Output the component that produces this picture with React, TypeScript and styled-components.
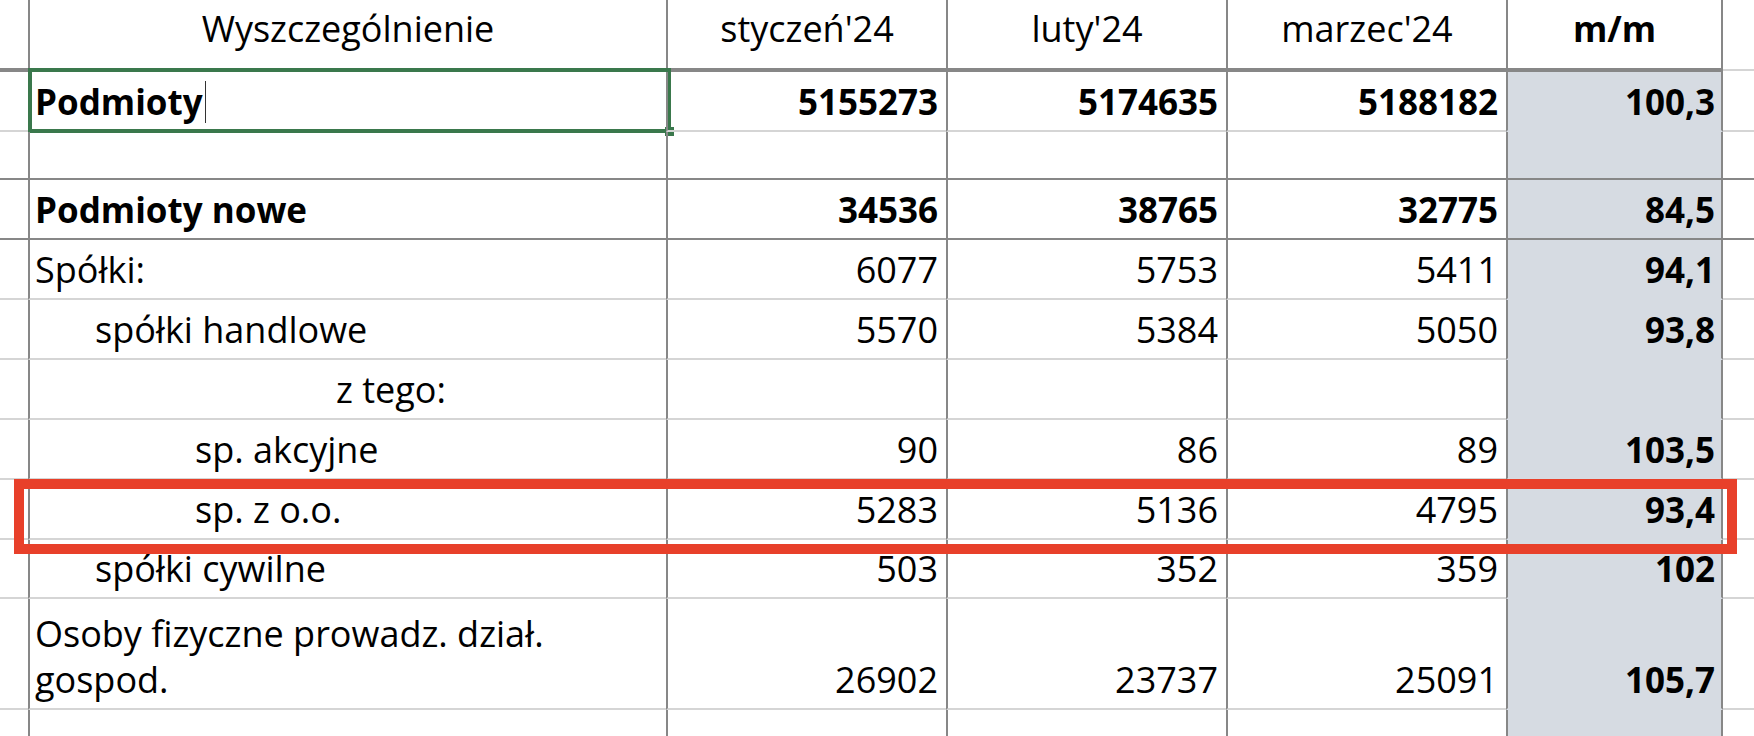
import React from "react";
import styled, { createGlobalStyle, css } from "styled-components";

const GlobalStyle = createGlobalStyle`
  html, body { margin: 0; padding: 0; background: #ffffff; overflow: hidden; }
  body { font-family: "Open Sans", "Noto Sans", sans-serif; color: #000; }
  * { box-sizing: border-box; }
`;

const DARK = "#878787";
const LIGHT = "#d5d5d5";
const SHADE = "#d6dbe2";
const GREEN = "#3a784c";
const RED = "#e8402a";

type Line = "thick" | "dark" | "light";

const lineCss = (line: Line, shaded = false) => {
  if (line === "thick") return css`border-bottom: 4px solid ${DARK};`;
  if (line === "dark") return css`border-bottom: 2px solid ${DARK};`;
  return css`border-bottom: 2px solid ${shaded ? "transparent" : LIGHT};`;
};

const Sheet = styled.div`
  width: 1754px;
  height: 736px;
  overflow: hidden;
  display: flex;
  flex-direction: column;
  line-height: 46px;
`;

const Row = styled.div<{ $h: number }>`
  position: relative;
  display: grid;
  grid-template-columns: 28px 638px 280px 280px 280px 217px 1fr;
  height: ${(p) => p.$h}px;
  flex: none;
`;

const Gutter = styled.div<{ $line: Line }>`
  ${(p) => lineCss(p.$line)}
`;

const Filler = styled.div<{ $line: Line }>`
  ${(p) => lineCss(p.$line === "thick" ? "light" : p.$line)}
  ${(p) => p.$line === "thick" && css`margin-bottom: 1px;`}
`;

const Cell = styled.div<{ $line: Line; $bold?: boolean }>`
  position: relative;
  display: flex;
  align-items: flex-end;
  border-left: 2px solid ${DARK};
  padding-bottom: 5px;
  font-size: ${(p) => (p.$bold ? 35 : 36)}px;
  font-weight: ${(p) => (p.$bold ? 700 : 400)};
  white-space: nowrap;
  ${(p) => lineCss(p.$line)}
`;

const HeadCell = styled(Cell)`
  align-items: flex-start;
  justify-content: center;
  padding-top: 6px;
  padding-bottom: 0;
`;

const LabelCell = styled(Cell)<{ $indent: number }>`
  padding-left: ${(p) => p.$indent}px;
`;

const LabelLines = styled.div`
  display: flex;
  flex-direction: column;
`;

const NumCell = styled(Cell)`
  justify-content: flex-end;
  padding-right: 8px;
`;

const MmCell = styled(Cell)<{ $shaded?: boolean }>`
  justify-content: flex-end;
  padding-right: 6px;
  font-size: 35px;
  font-weight: 700;
  border-right: 2px solid ${DARK};
  background: ${(p) => (p.$shaded ? SHADE : "#ffffff")};
  ${(p) => lineCss(p.$line, p.$shaded)}
`;

const MmHead = styled(HeadCell)`
  border-right: 2px solid ${DARK};
`;

const Selection = styled.div`
  position: absolute;
  left: -2px;
  top: -4px;
  width: 643px;
  height: 65px;
  border: 4px solid ${GREEN};
  pointer-events: none;
  &::after {
    content: "";
    position: absolute;
    right: -7px;
    bottom: -7px;
    width: 9px;
    height: 9px;
    background: ${GREEN};
  }
`;

const Caret = styled.span`
  display: inline-block;
  width: 1px;
  height: 42px;
  margin-left: 2px;
  background: #333;
  vertical-align: -8px;
`;

const Highlight = styled.div`
  position: absolute;
  left: 14px;
  top: -1px;
  width: 1723px;
  height: 75px;
  border: 10px solid ${RED};
  pointer-events: none;
  z-index: 2;
`;

type DataRow = {
  label: string[];
  bold?: boolean;
  indent?: number;
  vals: string[];
  mm: string;
  h: number;
  line: Line;
  selected?: boolean;
  highlight?: boolean;
};

const rows: DataRow[] = [
  { label: ["Podmioty"], bold: true, vals: ["5155273", "5174635", "5188182"], mm: "100,3", h: 60, line: "light", selected: true },
  { label: [], vals: ["", "", ""], mm: "", h: 48, line: "dark" },
  { label: ["Podmioty nowe"], bold: true, vals: ["34536", "38765", "32775"], mm: "84,5", h: 60, line: "dark" },
  { label: ["Spółki:"], vals: ["6077", "5753", "5411"], mm: "94,1", h: 60, line: "light" },
  { label: ["spółki handlowe"], indent: 65, vals: ["5570", "5384", "5050"], mm: "93,8", h: 60, line: "light" },
  { label: ["z tego:"], indent: 306, vals: ["", "", ""], mm: "", h: 60, line: "light" },
  { label: ["sp. akcyjne"], indent: 165, vals: ["90", "86", "89"], mm: "103,5", h: 60, line: "light" },
  { label: ["sp. z o.o."], indent: 165, vals: ["5283", "5136", "4795"], mm: "93,4", h: 60, line: "light", highlight: true },
  { label: ["spółki cywilne"], indent: 65, vals: ["503", "352", "359"], mm: "102", h: 59, line: "light" },
  { label: ["Osoby fizyczne prowadz. dział.", "gospod."], vals: ["26902", "23737", "25091"], mm: "105,7", h: 111, line: "light" },
  { label: [], vals: ["", "", ""], mm: "", h: 60, line: "light" },
];

const headers = ["styczeń'24", "luty'24", "marzec'24"];

export default function App() {
  return (
    <>
      <GlobalStyle />
      <Sheet>
        <Row $h={72}>
          <Gutter $line="thick" />
          <HeadCell $line="thick">Wyszczególnienie</HeadCell>
          {headers.map((h) => (
            <HeadCell key={h} $line="thick">
              {h}
            </HeadCell>
          ))}
          <MmHead $line="thick" $bold>
            m/m
          </MmHead>
          <Filler $line="thick" />
        </Row>
        {rows.map((r, i) => (
          <Row key={i} $h={r.h}>
            <Gutter $line={r.line} />
            <LabelCell $line={r.line} $bold={r.bold} $indent={r.indent ?? 5}>
              <LabelLines>
                {r.label.map((t, j) => (
                  <span key={j}>
                    {t}
                    {r.selected && <Caret />}
                  </span>
                ))}
              </LabelLines>
              {r.selected && <Selection />}
            </LabelCell>
            {r.vals.map((v, j) => (
              <NumCell key={j} $line={r.line} $bold={r.bold}>
                {v}
              </NumCell>
            ))}
            <MmCell $line={r.line} $shaded>
              {r.mm}
            </MmCell>
            <Filler $line={r.line} />
            {r.highlight && <Highlight />}
          </Row>
        ))}
      </Sheet>
    </>
  );
}
